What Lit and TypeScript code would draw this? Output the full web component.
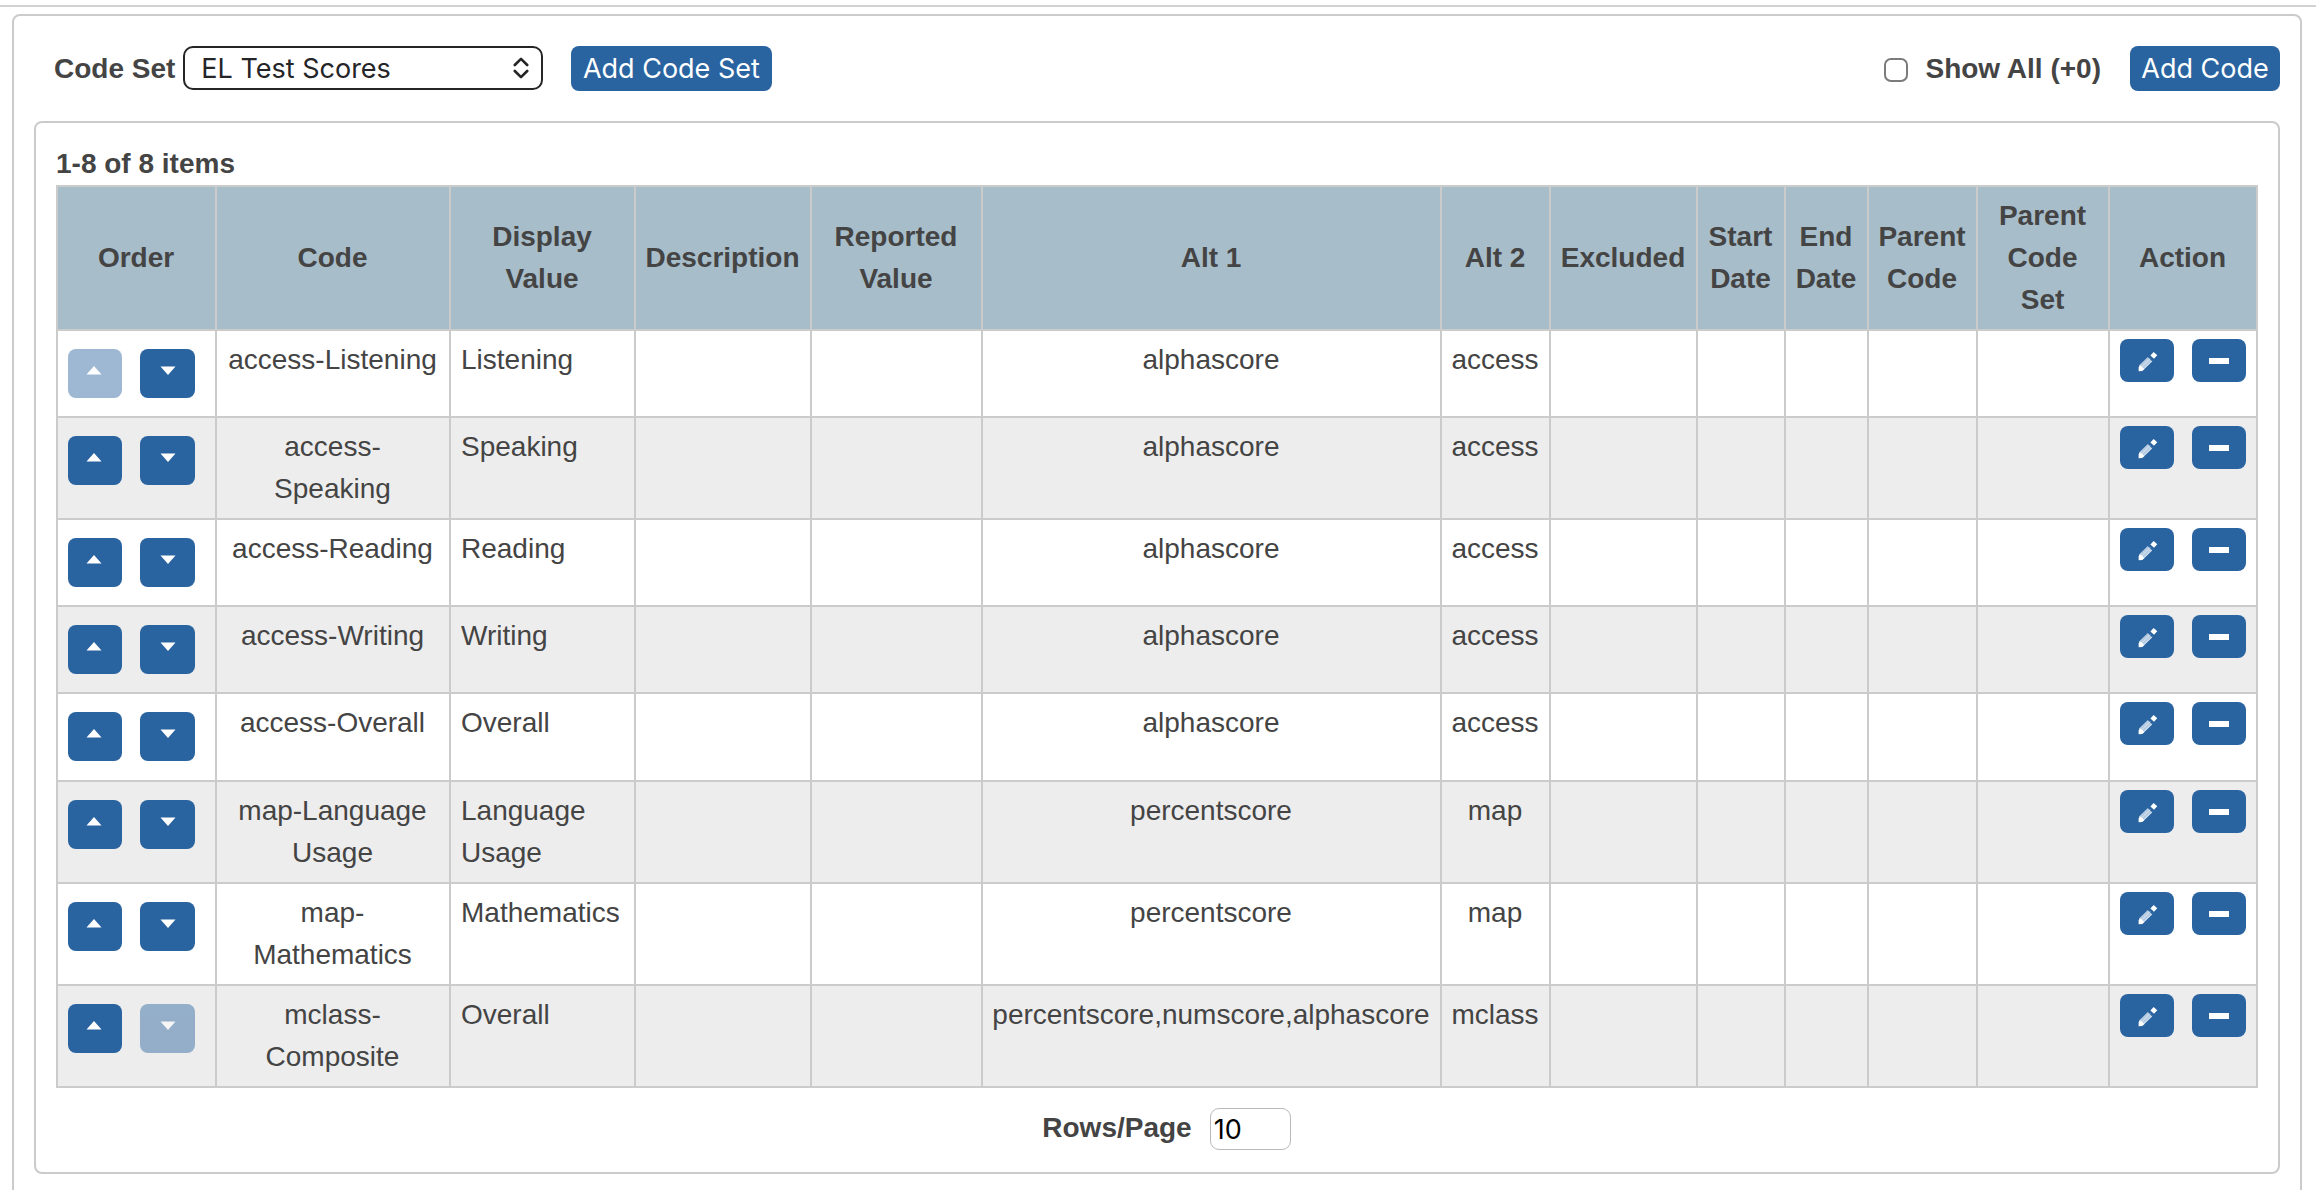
import { LitElement, html, css, svg, nothing } from "lit";
import { customElement, property } from "lit/decorators.js";
import { classMap } from "lit/directives/class-map.js";

interface CodeRow {
  code: string;
  display: string;
  alt1: string;
  alt2: string;
}

const HEADERS = [
  "Order", "Code", "Display\nValue", "Description", "Reported\nValue", "Alt 1", "Alt 2",
  "Excluded", "Start\nDate", "End\nDate", "Parent\nCode", "Parent\nCode\nSet", "Action",
];

const ROWS: CodeRow[] = [
  { code: "access-Listening", display: "Listening", alt1: "alphascore", alt2: "access" },
  { code: "access-\nSpeaking", display: "Speaking", alt1: "alphascore", alt2: "access" },
  { code: "access-Reading", display: "Reading", alt1: "alphascore", alt2: "access" },
  { code: "access-Writing", display: "Writing", alt1: "alphascore", alt2: "access" },
  { code: "access-Overall", display: "Overall", alt1: "alphascore", alt2: "access" },
  { code: "map-Language\nUsage", display: "Language\nUsage", alt1: "percentscore", alt2: "map" },
  { code: "map-\nMathematics", display: "Mathematics", alt1: "percentscore", alt2: "map" },
  { code: "mclass-\nComposite", display: "Overall", alt1: "percentscore,numscore,alphascore", alt2: "mclass" },
];

const GLYPHS = {
  up: svg`<path d="M18.5 25.5 L26 17 L33.5 25.5 Z" fill="#fff"/>`,
  down: svg`<path d="M20.5 17.5 H35.5 L28 26 Z" fill="#fff"/>`,
  edit: svg`
    <path d="M19 26.6 L27.8 18 L32.2 22.4 L23.4 31 L19 32 Z" fill="#b4cbe2"/>
    <path d="M18.6 32.2 V28 L20.8 26.4 L24.4 30 L22.4 32 Z" fill="#fff"/>
    <path d="M22 27.6 L30 19.6 M24 29.6 L31.8 21.8" stroke="#dce8f3" stroke-width="1" fill="none"/>
    <path d="M30.4 16.4 L33.6 13 L37.3 16.2 L34 19.8 Z" fill="#fff"/>`,
  remove: svg`<rect x="17" y="19" width="20" height="6" fill="#fff"/>`,
};

@customElement("icon-button")
export class IconButton extends LitElement {
  @property() glyph: keyof typeof GLYPHS = "up";
  @property({ type: Boolean, reflect: true }) disabled = false;

  static styles = css`
    :host { display: block; flex: none; }
    .btn {
      display: flex; align-items: flex-start; justify-content: flex-start;
      width: 100%; height: 100%; padding: 0; border: 0;
      border-radius: 8px; background: #2963a0;
    }
    .btn:disabled { opacity: 0.45; }
    .glyph { display: block; flex: none; width: 54px; height: 43px; }
  `;

  render() {
    return html`<button class="btn" ?disabled=${this.disabled}>
      <svg class="glyph" viewBox="0 0 54 43">${GLYPHS[this.glyph]}</svg>
    </button>`;
  }
}

@customElement("app-root")
export class AppRoot extends LitElement {
  static styles = css`
    :host {
      display: block; height: 1190px; overflow: hidden; background: #fff; color: #444;
      font: 28px/42px "Liberation Sans", Arial, sans-serif;
    }
    * { box-sizing: border-box; }
    .rule { height: 2px; margin-top: 5px; background: #d2d2d2; }
    .outer {
      margin: 7px 14px 0 12px; height: 1300px; padding: 30px 20px 0;
      border: 2px solid #cbcbcb; border-radius: 8px;
    }
    .toolbar { display: flex; align-items: center; height: 45px; padding-left: 20px; }
    .label { font-weight: bold; white-space: nowrap; }
    .select {
      display: flex; align-items: center; justify-content: space-between;
      width: 360px; height: 44px; margin: 0 28px 1px 8px; padding: 0 12px 0 16px;
      border: 2px solid #252528; border-radius: 10px; color: #252528;
      font-family: Inter, sans-serif; font-size: 27px; white-space: nowrap;
    }
    .select-text { padding-top: 1px; }
    .chevrons { width: 16px; height: 22px; }
    .text-btn {
      height: 45px; padding: 0; border: 0; border-radius: 8px; background: #2963a0; color: #fff;
      font: 27px/42px Inter, sans-serif; white-space: nowrap;
    }
    .wide { width: 201px; padding-right: 1px; }
    .narrow { width: 150px; margin-left: 28px; }
    .check {
      appearance: none; width: 24px; height: 24px; margin: 3px 17px 0 auto;
      border: 2px solid #7b7b7b; border-radius: 7px; background: #fff;
    }
    .toggle-label { margin-right: 1px; }
    .inner {
      margin-top: 30px; height: 1053px; padding: 20px;
      border: 2px solid #cbcbcb; border-radius: 8px;
    }
    .count { height: 42px; }
    .table {
      display: grid; width: 2202px; padding: 2px; gap: 2px; background: #cbcbcb;
      grid-template-columns: 157px 232px 183px 174px 169px 457px 107px 145px 86px 81px 107px 130px 146px;
      grid-template-rows: 142px 85px 100px 85px 85px 86px 100px 100px 100px;
    }
    .row { display: contents; }
    .head {
      display: flex; align-items: center; justify-content: center; padding-right: 1px;
      background: #a8bdca; font-weight: bold; text-align: center; white-space: pre;
    }
    .cell {
      padding: 8px 1px 0 0; background: #fff; text-align: center; white-space: pre; overflow: hidden;
    }
    .odd .cell { background: #ededed; }
    .cell.left { padding-left: 10px; text-align: left; }
    .cell.order { display: flex; padding: 18px 0 0 10px; gap: 18px; }
    .cell.action { display: flex; padding: 8px 0 0 10px; gap: 18px; }
    .up { width: 54px; height: 49px; }
    .down { width: 55px; height: 49px; }
    .act { width: 54px; height: 43px; }
    .pager { display: flex; justify-content: center; align-items: center; margin-top: 20px; padding-left: 19px; }
    .pager-label { margin: -3px 18px 0 0; }
    .num {
      width: 81px; height: 42px; padding: 1px 0 0 3px; border: 1px solid #b9b9b9; border-radius: 9px;
      background: #fff; color: #000; font: 27px/40px Inter, sans-serif;
    }
  `;

  private renderRow(r: CodeRow, i: number) {
    const last = ROWS.length - 1;
    return html`<div class=${classMap({ row: true, odd: i % 2 === 1 })} role="row">
      <div class="cell order" role="cell">
        <icon-button class="up" glyph="up" ?disabled=${i === 0}></icon-button>
        <icon-button class="down" glyph="down" ?disabled=${i === last}></icon-button>
      </div>
      <div class="cell" role="cell">${r.code}</div>
      <div class="cell left" role="cell">${r.display}</div>
      <div class="cell" role="cell">${nothing}</div>
      <div class="cell" role="cell">${nothing}</div>
      <div class="cell" role="cell">${r.alt1}</div>
      <div class="cell" role="cell">${r.alt2}</div>
      ${[0, 1, 2, 3, 4].map(() => html`<div class="cell" role="cell"></div>`)}
      <div class="cell action" role="cell">
        <icon-button class="act" glyph="edit"></icon-button>
        <icon-button class="act" glyph="remove"></icon-button>
      </div>
    </div>`;
  }

  render() {
    return html`
      <div class="rule"></div>
      <div class="outer">
        <div class="toolbar">
          <span class="label">Code Set</span>
          <div class="select" role="combobox">
            <span class="select-text">EL Test Scores</span>
            <svg class="chevrons" viewBox="0 0 16 22" fill="none" stroke="#252528" stroke-width="2.6"
              stroke-linecap="round" stroke-linejoin="round">
              <path d="M1.8 8 L8 1.8 L14.2 8 M1.8 14 L8 20.2 L14.2 14" />
            </svg>
          </div>
          <button class="text-btn wide">Add Code Set</button>
          <input class="check" type="checkbox" />
          <span class="label toggle-label">Show All (+0)</span>
          <button class="text-btn narrow">Add Code</button>
        </div>
        <div class="inner">
          <div class="label count">1-8 of 8 items</div>
          <div class="table" role="table">
            <div class="row" role="row">
              ${HEADERS.map((h) => html`<div class="head" role="columnheader">${h}</div>`)}
            </div>
            ${ROWS.map((r, i) => this.renderRow(r, i))}
          </div>
          <div class="pager">
            <span class="label pager-label">Rows/Page</span>
            <input class="num" type="text" value="10" />
          </div>
        </div>
      </div>
    `;
  }
}
